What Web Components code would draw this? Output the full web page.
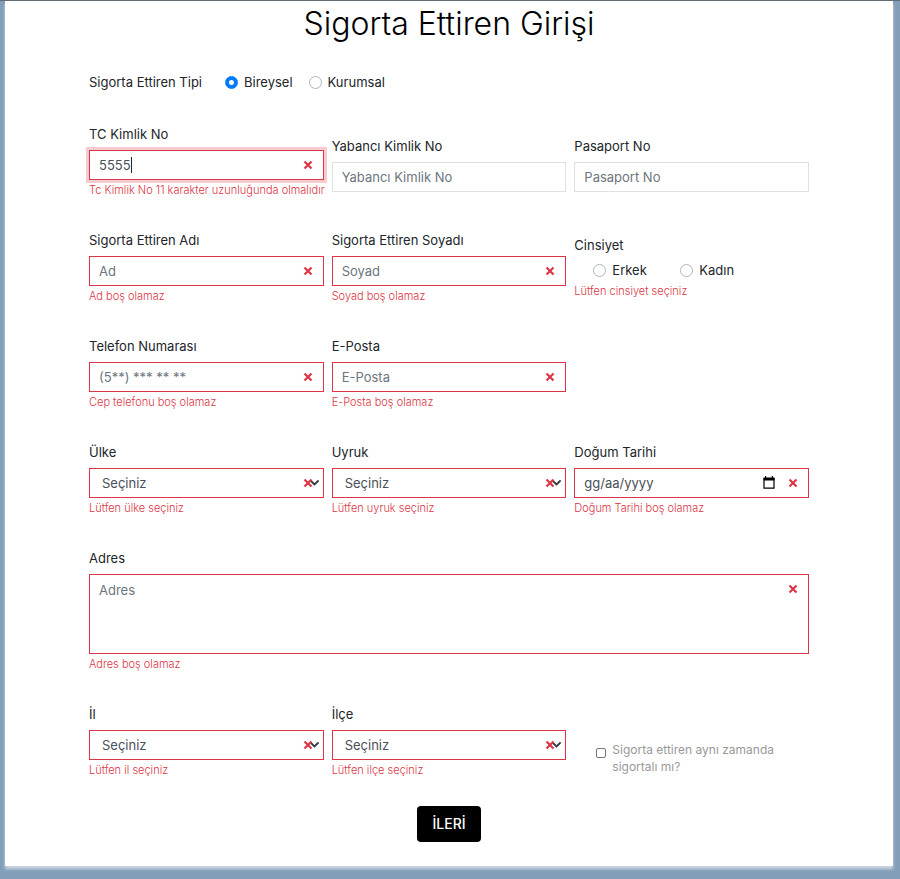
<!DOCTYPE html>
<html lang="tr">
<head>
<meta charset="utf-8">
<meta name="viewport" content="width=device-width, initial-scale=1">
<title>Sigorta Ettiren Girişi</title>
<style>
  body {
    margin: 0;
    background: #829eb8;
    font-family: Inter, "Noto Sans", sans-serif;
    font-size: 13px;
    line-height: 20px;
    color: #212529;
    --danger: #dc3545;
    --muted: #6c757d;
    --text: #495057;
  }
</style>
</head>
<body>
<policy-page>
  <policy-card heading="Sigorta Ettiren Girişi">
    <choice-group slot="type" layout="inline" label="Sigorta Ettiren Tipi" name="tip" options="Bireysel,Kurumsal" selected="Bireysel"></choice-group>

    <form-field kind="text" label="TC Kimlik No" placeholder="TC Kimlik No" value="5555" error="Tc Kimlik No 11 karakter uzunluğunda olmalıdır" active></form-field>
    <form-field kind="text" label="Yabancı Kimlik No" placeholder="Yabancı Kimlik No"></form-field>
    <form-field kind="text" label="Pasaport No" placeholder="Pasaport No"></form-field>

    <form-field kind="text" label="Sigorta Ettiren Adı" placeholder="Ad" error="Ad boş olamaz"></form-field>
    <form-field kind="text" label="Sigorta Ettiren Soyadı" placeholder="Soyad" error="Soyad boş olamaz"></form-field>
    <choice-group layout="stacked" label="Cinsiyet" name="cinsiyet" options="Erkek,Kadın" error="Lütfen cinsiyet seçiniz"></choice-group>

    <form-field kind="text" label="Telefon Numarası" placeholder="(5**) *** ** **" error="Cep telefonu boş olamaz"></form-field>
    <form-field kind="text" label="E-Posta" placeholder="E-Posta" error="E-Posta boş olamaz"></form-field>

    <form-field class="first" kind="select" label="Ülke" error="Lütfen ülke seçiniz"></form-field>
    <form-field kind="select" label="Uyruk" error="Lütfen uyruk seçiniz"></form-field>
    <form-field kind="date" label="Doğum Tarihi" placeholder="gg/aa/yyyy" error="Doğum Tarihi boş olamaz"></form-field>

    <form-field class="wide" kind="area" label="Adres" placeholder="Adres" error="Adres boş olamaz"></form-field>

    <form-field kind="select" label="İl" error="Lütfen il seçiniz"></form-field>
    <form-field kind="select" label="İlçe" error="Lütfen ilçe seçiniz"></form-field>
    <check-option>Sigorta ettiren aynı zamanda sigortalı mı?</check-option>

    <submit-button slot="action">İLERİ</submit-button>
  </policy-card>
</policy-page>

<script>
const define = (name, build, after) => customElements.define(name, class extends HTMLElement {
  connectedCallback() {
    if (this.shadowRoot) return;
    const root = this.attachShadow({ mode: "open" });
    const t = document.createElement("template");
    t.innerHTML = `<style>*{box-sizing:border-box}</style>` + build(this);
    root.append(t.content.cloneNode(true));
    if (after) after(this, root);
  }
});
const attr = (el, n) => el.getAttribute(n) || "";

define("policy-page", () => `
  <style>
    :host { display: block; border-top: 1px solid #626c76; padding: 0 7px 13px 5px; }
  </style>
  <slot></slot>`);

define("policy-card", el => `
  <style>
    :host { display: block; background: #fff; padding: 5px 84px 24px; box-shadow: 0 3px 3px rgba(255,255,255,.6); }
    h1 { margin: 0 0 30px; font-size: 32px; line-height: 36px; font-weight: 300; color: #000; text-align: center; }
    .grid { display: grid; grid-template-columns: repeat(3, minmax(0, 1fr)); gap: 26px 8px; align-items: center; margin: 32px 0 22px; }
    ::slotted(.wide) { grid-column: 1 / -1; }
    ::slotted(.first) { grid-column-start: 1; }
    footer { display: flex; justify-content: center; }
  </style>
  <h1>${attr(el, "heading")}</h1>
  <slot name="type"></slot>
  <div class="grid"><slot></slot></div>
  <footer><slot name="action"></slot></footer>`);

const errorStyle = `.error { margin: 0; padding-bottom: 4px; font-size: 11px; font-weight: 300; line-height: 20px; color: var(--danger); white-space: nowrap; }`;

const cross = `<svg class="cross" viewBox="0 0 10 10" width="10" height="10" aria-hidden="true"><path d="M1.5 1.5 8.5 8.5M8.5 1.5 1.5 8.5" stroke="#dc3545" stroke-width="2.2" fill="none"/></svg>`;
const chevron = `<svg class="chevron" viewBox="0 0 9 6" width="9" height="6" aria-hidden="true"><path d="M1 1 4.5 4.5 8 1" stroke="#343a40" stroke-width="1.8" fill="none" stroke-linecap="round"/></svg>`;
const calendar = `<svg viewBox="0 0 12 13" width="12" height="13" aria-hidden="true"><path d="M1 2.5H11V12.2H1Z" fill="none" stroke="#000" stroke-width="1.2"/><path d="M.5 1.5H2V0H3.2V1.5H8.8V0H10V1.5H11.5V4.5H.5Z" fill="#000"/></svg>`;

define("form-field", el => {
  const kind = attr(el, "kind"), ph = attr(el, "placeholder"), err = attr(el, "error");
  const aria = err ? `aria-invalid="true" aria-describedby="e"` : "";
  const control = {
    text: `<input id="c" type="text" placeholder="${ph}" value="${attr(el, "value")}" ${aria}>`,
    date: `<input id="c" type="text" inputmode="numeric" placeholder="${ph}" ${aria}><button type="button" aria-label="Takvim">${calendar}</button>`,
    area: `<textarea id="c" placeholder="${ph}" ${aria}></textarea>`,
    select: `<select id="c" ${aria}><option>Seçiniz</option></select>${chevron}`
  }[kind];
  return `
  <style>
    :host { display: block; min-width: 0; }
    label { display: block; width: fit-content; margin-bottom: 6px; }
    .box { position: relative; display: flex; }
    input, select, textarea {
      appearance: none; width: 100%; height: 30px; margin: 0; padding: 0 9px;
      border: 1px solid #dee2e6; border-radius: 0; background: #fff; outline: 0;
      font: inherit; color: var(--text);
    }
    select { padding: 0 12px; }
    textarea { height: 80px; padding: 5px 9px; resize: none; }
    ::placeholder { color: var(--muted); opacity: 1; }
    .date ::placeholder { color: var(--text); }
    [aria-invalid] { border-color: var(--danger); }
    :host([active]) input { box-shadow: 0 0 0 3px rgba(220,53,69,.25); caret-color: transparent; }
    .caret { position: absolute; left: 42px; top: 7px; width: 1px; height: 16px; background: #212529; }
    .cross { position: absolute; right: 11px; top: 10px; pointer-events: none; }
    .chevron { position: absolute; right: 5px; top: 12px; pointer-events: none; }
    button { position: absolute; right: 34px; top: 8px; display: flex; padding: 0; border: 0; background: none; }
    ${errorStyle}
  </style>
  <label for="c">${attr(el, "label")}</label>
  <div class="box ${kind}">${control}${err ? cross : ""}${el.hasAttribute("active") ? `<span class="caret"></span>` : ""}</div>
  ${err ? `<p class="error" id="e">${err}</p>` : ""}`;
});

define("choice-group", el => {
  const name = attr(el, "name"), err = attr(el, "error");
  return `
  <style>
    :host { display: block; }
    fieldset { margin: 0; padding: 0; border: 0; min-width: 0; display: flex; align-items: center; }
    .title { width: 136px; }
    .options { display: flex; gap: 16px; }
    label { display: flex; align-items: center; gap: 6px; }
    input { appearance: none; flex: none; width: 13px; height: 13px; margin: 0; border: 1px solid #adb5bd; border-radius: 50%; background: #fff; }
    input:checked { border-color: #007bff; background: radial-gradient(circle, #fff 2px, #007bff 3px); }
    .stacked { display: block; }
    .stacked .options { gap: 0; padding-left: 19px; margin-top: 4px; }
    .stacked label { width: 87px; line-height: 22px; }
    ${errorStyle}
  </style>
  <fieldset class="${attr(el, "layout")}" aria-label="${attr(el, "label")}">
    <div class="title">${attr(el, "label")}</div>
    <div class="options">${attr(el, "options").split(",").map(o => `
      <label><input type="radio" name="${name}" ${o === attr(el, "selected") ? "checked" : ""}>${o}</label>`).join("")}
    </div>
    ${err ? `<p class="error">${err}</p>` : ""}
  </fieldset>`;
});

define("check-option", () => `
  <style>
    :host { display: block; padding: 28px 24px 0 22px; }
    label { display: flex; gap: 6px; font-size: 12px; line-height: 17px; color: #999; }
    input { appearance: none; flex: none; width: 10px; height: 10px; margin: 7px 0 0; border: 1px solid #767676; border-radius: 2px; background: #fff; }
    input:checked { background: #007bff; }
  </style>
  <label><input type="checkbox"><span><slot></slot></span></label>`);

define("submit-button", () => `
  <style>
    :host { display: block; }
    button { height: 36px; padding: 0 15px; border: 0; border-radius: 4px; background: #000; color: #fff; font: inherit; font-size: 14px; font-weight: 500; }
  </style>
  <button type="button"><slot></slot></button>`);
</script>
</body>
</html>
